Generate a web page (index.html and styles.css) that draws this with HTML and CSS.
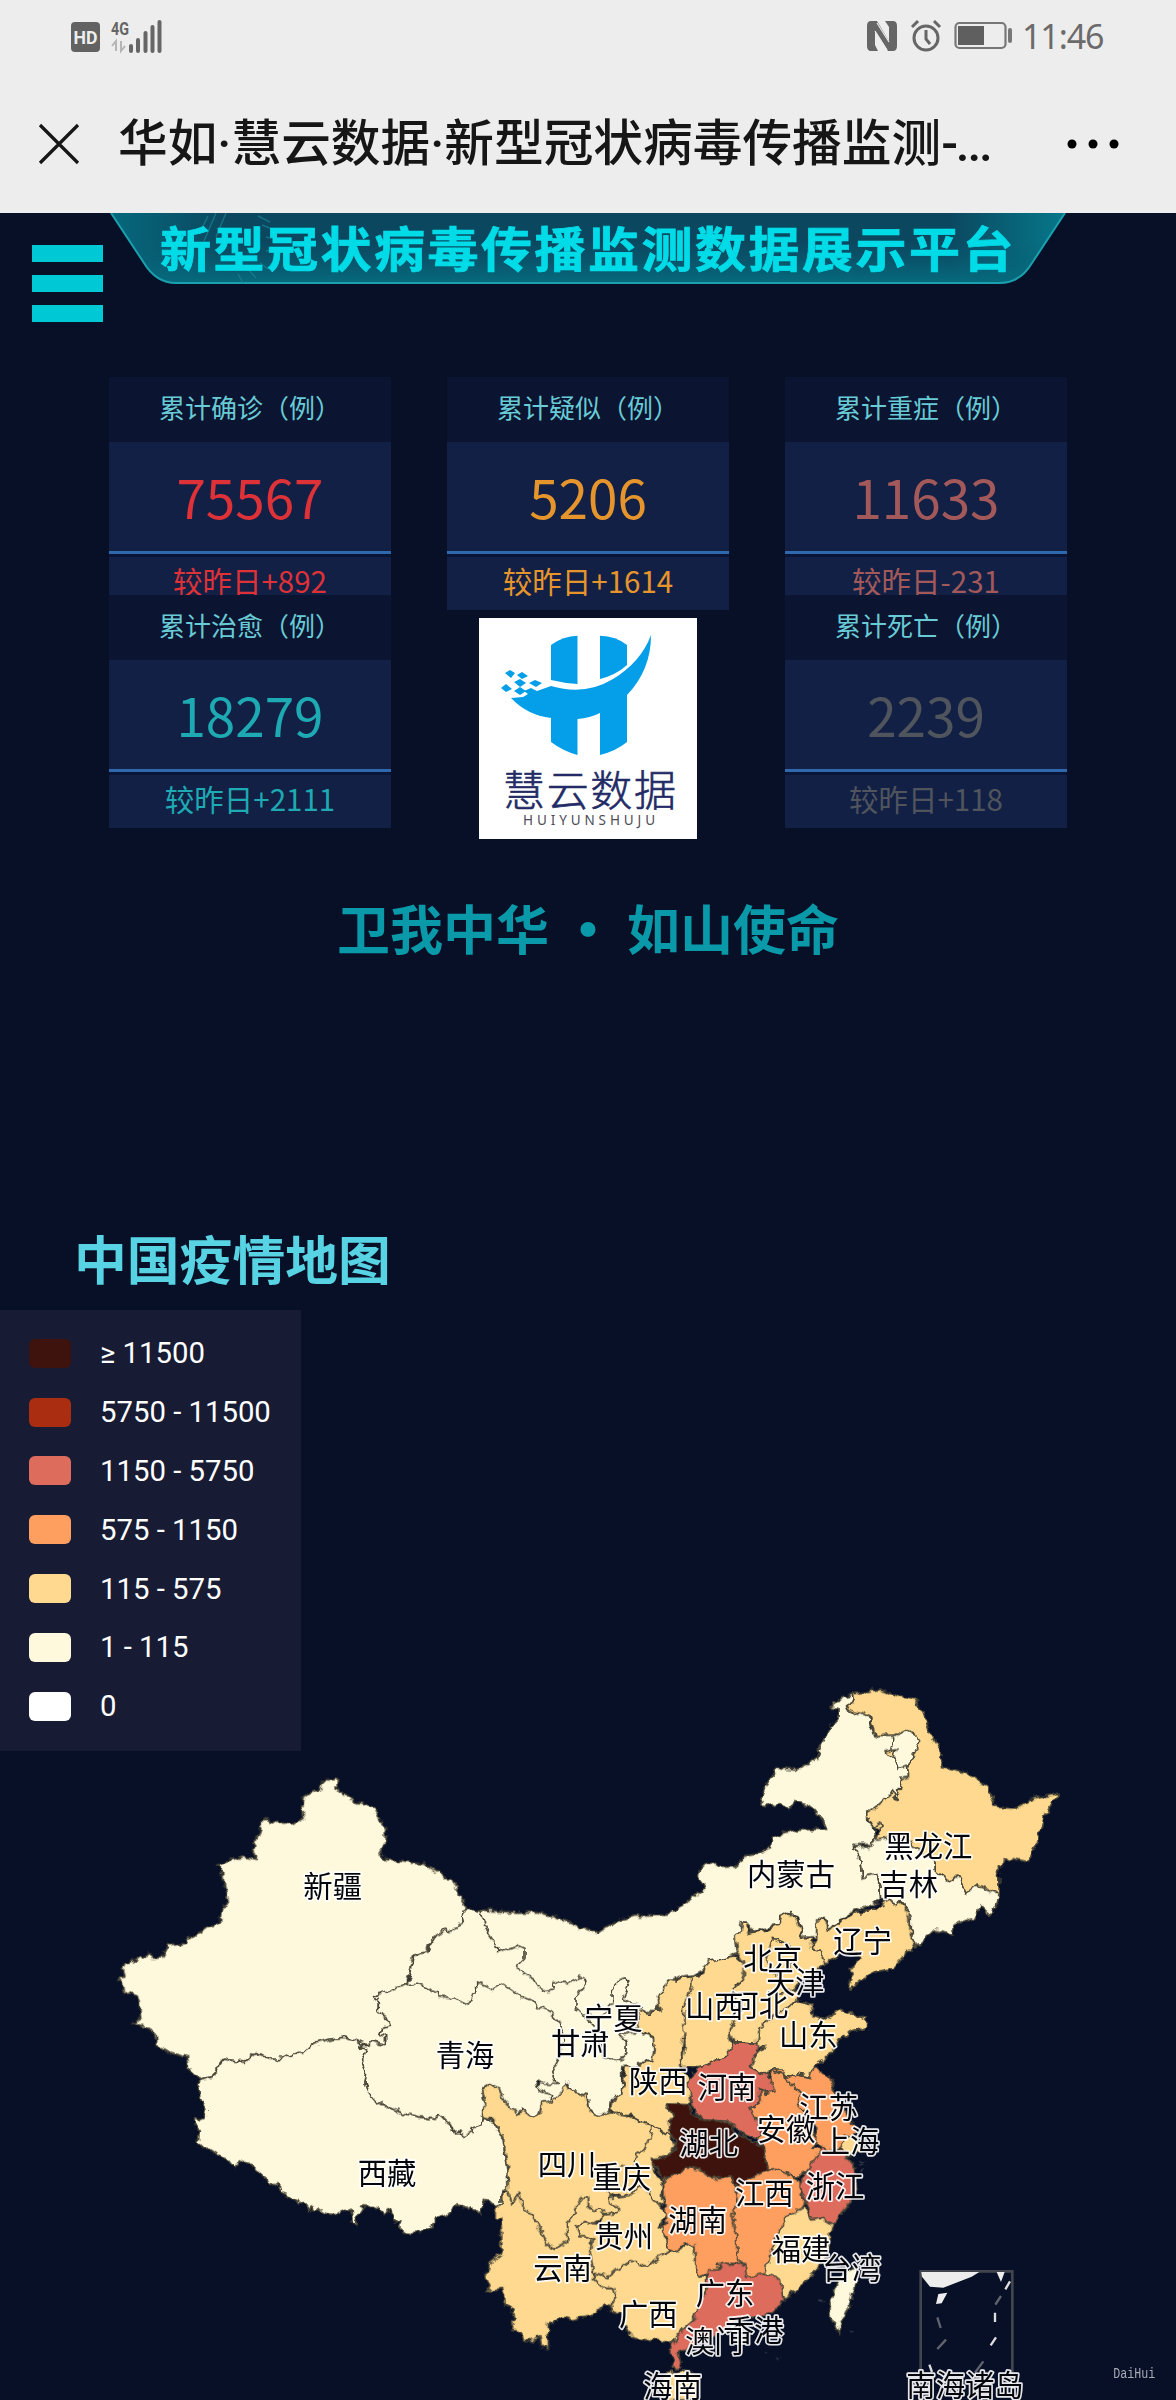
FILE: index.html
```html
<!DOCTYPE html>
<html lang="zh-CN">
<head>
<meta charset="utf-8">
<title>华如·慧云数据·新型冠状病毒传播监测</title>
<link rel="stylesheet" href="styles.css">
</head>
<body>
<header class="top">
  <div class="status">
    <svg class="status-left" viewBox="0 0 100 36" width="100" height="36">
      <rect x="1" y="4" width="29" height="30" rx="4" fill="#626262"/>
      <text x="15.500" y="25.500" class="hd" textLength="24" lengthAdjust="spacingAndGlyphs">HD</text>
      <text x="41" y="16.500" class="g4" textLength="18" lengthAdjust="spacingAndGlyphs">4G</text>
      <path d="M46 33V23l-4 5M51 23v10l4-5" fill="none" stroke="#b5b5b5" stroke-width="2"/>
      <path d="M61 29v5M68 23v11M75.500 16v18M82.500 10v24M89.500 5v29" stroke="#666" stroke-width="4" stroke-linecap="round" transform="translate(0 -1)"/>
    </svg>
    <div class="status-right">
      <svg viewBox="0 0 32 34" width="32" height="34">
        <path d="M5 2h6l12 20V8l-4-6h8q4 0 4 5v20q0 5-4 5h-5L9 12v14l3 6H5q-4 0-4-5V7q0-5 4-5z" fill="#666"/>
        <path d="M11 4l12 19M9 12l12 19" stroke="#ededed" stroke-width="1.200"/>
      </svg>
      <svg viewBox="0 0 32 34" width="32" height="34" fill="none" stroke="#666" stroke-width="3">
        <circle cx="16" cy="19" r="12"/><path d="M16 11v9l4 5M2 8l6-6M30 8l-6-6"/>
      </svg>
      <svg viewBox="0 0 60 30" width="60" height="30">
        <rect x="1.500" y="2" width="50" height="25" rx="4" fill="none" stroke="#777" stroke-width="2.200"/>
        <rect x="4" y="5" width="26" height="19" fill="#5f5f5f"/><rect x="54" y="7" width="4" height="15" rx="2" fill="#777"/>
      </svg>
      <span class="time">11:46</span>
    </div>
  </div>
  <div class="nav">
    <svg viewBox="0 0 42 42" width="42" height="42"><path d="M2 2L40 40M40 2L2 40" stroke="#161616" stroke-width="3.200"/></svg>
    <h1>华如·慧云数据·新型冠状病毒传播监测<span>-...</span></h1>
    <svg viewBox="0 0 54 12" width="54" height="12"><circle cx="6" cy="6" r="4.500"/><circle cx="27" cy="6" r="4.500"/><circle cx="48" cy="6" r="4.500"/></svg>
  </div>
</header>

<div class="hero">
  <div class="menu"><i></i><i></i><i></i></div>
  <div class="banner">
    <svg viewBox="0 0 956 72" width="956" height="72">
      <defs>
        <linearGradient id="bannerFill" x1="0" x2="1" y1="0" y2="0"><stop offset="0" stop-color="#06687c"/><stop offset=".12" stop-color="#0b4860"/><stop offset=".88" stop-color="#0b4860"/><stop offset="1" stop-color="#06788a"/></linearGradient>
        <linearGradient id="bannerGlow" x1="0" x2="0" y1="0" y2="1"><stop offset=".4" stop-color="#075e74" stop-opacity="0"/><stop offset="1" stop-color="#066b7e"/></linearGradient>
      </defs>
      <path d="M1 0L34 50Q46 70 66 70H890Q910 70 922 50L955 0Z" fill="url(#bannerFill)"/>
      <path d="M1 0L34 50Q46 70 66 70H890Q910 70 922 50L955 0" fill="url(#bannerGlow)" stroke="#1ba0ae" stroke-width="2"/>
      <path d="M148 3l12 6M152 12l10 4M156 24l10 2M156 38l10-2M150 50l8 6M138 56l8 9M128 61l5 9M98 3l-9 18M106 0l-12 28M116 0l-10 24" stroke="#1a8290" stroke-opacity=".7" stroke-width="1.500"/>
    </svg>
    <h2>新型冠状病毒传播监测数据展示平台</h2>
  </div>
</div>

<main>
  <section class="stats">
    <div class="col">
      <article class="card red"><h3>累计确诊（例）</h3><strong>75567</strong><p>较昨日+892</p></article>
      <article class="card teal"><h3>累计治愈（例）</h3><strong>18279</strong><p>较昨日+2111</p></article>
    </div>
    <div class="col">
      <article class="card orange"><h3>累计疑似（例）</h3><strong>5206</strong><p>较昨日+1614</p></article>
      <svg class="logo" viewBox="0 0 218 221" width="218" height="221">
        <rect width="218" height="221" fill="#fff"/>
        <g fill="#049fe8">
          <path d="M72 27Q84 18 98.500 17.700V66Q84 65 72 62Z"/>
          <path d="M121 17.700Q137 18 148 27V47Q137 57 121 61Z"/>
          <path d="M32 80L44 79 49 76 45 73 52 70 58 73 72 68Q106 78 134 61 162 44 172 17 172 52 148 77V124Q137 133 121 137V95Q111 100 98.500 101V137Q84 133 72 124V100Q48 97 32 80Z"/>
          <path d="M26 55l5-3 5 3-4 5zM38 57l5-3 6 4-6 3zM35 64l6-3 6 4-6 4zM50 65l6-3 7 3-6 4zM22 70l5-4 6 5-6 3zM35 73l6-4 6 4-6 4z"/>
        </g>
        <text x="24" y="188" class="logo-cn" textLength="173">慧云数据</text>
        <text x="44" y="207" class="logo-en" textLength="132">HUIYUNSHUJU</text>
      </svg>
    </div>
    <div class="col">
      <article class="card rust"><h3>累计重症（例）</h3><strong>11633</strong><p>较昨日-231</p></article>
      <article class="card gray"><h3>累计死亡（例）</h3><strong>2239</strong><p>较昨日+118</p></article>
    </div>
  </section>

  <div class="slogan">卫我中华<b>•</b>如山使命</div>
  <h2 class="map-title">中国疫情地图</h2>

  <section class="map">
    <svg class="china" viewBox="0 3930 3528 3270" width="1176" height="1090">
      <defs>
        <filter id="coast" filterUnits="userSpaceOnUse" x="200" y="4900" width="3000" height="2300" color-interpolation-filters="sRGB">
          <feTurbulence type="fractalNoise" baseFrequency=".045" numOctaves="2" seed="4"/>
          <feDisplacementMap in="SourceGraphic" scale="24" xChannelSelector="R" yChannelSelector="G"/>
        </filter>
      </defs>
      <g class="land" filter="url(#coast)">
        <g class="l1">
          <path transform="translate(300 5280)" d="M1100 445L1085 420 1075 395 1062 370 1055 355 1035 352 1010 335 970 312 910 306 850 298 838 282 855 250 857 205 835 175 820 140 785 128 765 128 740 105 725 100 708 80 710 58 695 62 665 62 657 90 630 98 610 110 605 135 612 175 595 185 578 195 560 188 530 190 510 183 490 175 485 195 475 225 462 250 458 272 470 298 430 290 400 300 370 305 350 315 366 330 372 370 380 400 385 425 370 435 378 440 362 460 362 485 350 493 325 500 300 517 270 535 255 550 205 557 195 580 180 597 152 597 150 580 135 590 115 592 100 605 78 612 70 630 75 650 55 655 68 670 70 700 90 697 112 705 118 730 122 775 100 790 140 800 150 812 165 825 170 860 195 868 220 882 262 892 268 930 285 945 300 960 340 953 350 925 370 898 400 902 430 907 465 878 490 885 510 898 540 898 560 888 600 878 612 880 640 850 690 838 735 832 765 840 790 852 808 855 810 845 835 852 857 857 857 828 842 822 848 805 868 797 858 770 835 755 835 715 820 718 815 708 850 698 915 678 917 660 930 640 942 582 980 575 985 560 1010 530 1045 510 1050 518 1085 500 1090 485 1085 462Z"/>
          <path transform="translate(570 6300)" d="M30 -60L22 -35 30 -10 48 30 45 55 30 62 15 48 12 75 28 90 25 125 38 145 60 145 80 158 85 168 115 182 135 207 148 180 175 188 200 212 235 240 245 258 260 248 273 262 275 282 300 290 318 300 325 312 343 308 360 330 364 315 370 330 385 325 405 338 440 342 460 335 483 325 487 365 495 378 500 350 520 318 545 320 570 325 580 345 600 328 612 345 612 365 632 362 633 395 665 398 700 395 718 385 735 358 770 345 800 315 825 320 850 332 873 342 880 305 893 298 908 312 918 320 935 322 932 290 940 270 955 268 953 230 945 170 940 120 935 105 910 65 880 50 875 72 850 85 848 98 835 92 822 108 812 96 790 98 780 70 750 45 730 57 690 50 640 40 590 18 560 10 530 -30 525 -50 530 -85 515 -115 530 -150 510 -162 520 -168 495 -180 465 -188 420 -182 370 -170 342 -140 330 -142 290 -132 270 -122 240 -122 220 -135 195 -142 160 -113 130 -118 100 -122 80 -95 70 -67Z"/>
          <g transform="translate(1050 5640)">
            <path d="M350 88L335 95 340 130 300 155 290 148 260 165 232 212 195 222 180 290 165 315 300 400 640 500 560 620 570 720 640 640 655 605 665 635 710 645 715 685 745 708 780 695 785 655 815 645 815 560 870 560 870 545 912 545 912 475 870 455 920 440 930 340 880 240 700 200 390 90Z"/>
            <path d="M165 315L205 310 235 325 240 330 265 335 267 350 320 358 345 370 362 362 368 345 380 338 380 305 430 327 460 310 480 325 510 348 545 360 560 378 600 395 632 430 640 480 625 540 605 575 620 610 590 610 560 600 555 612 568 630 605 645 598 668 575 672 570 700 548 710 515 685 508 700 475 685 445 640 425 612 400 625 400 650 410 665 398 690 400 710 395 732 370 745 368 758 342 768 332 756 310 758 300 730 270 705 250 717 210 710 160 700 110 678 80 670 50 630 45 610 50 575 35 545 50 510 30 498 58 495 60 485 85 492 107 497 107 468 92 462 98 445 118 437 108 410 85 395 85 355 70 358 65 348 100 338Z"/>
            <path fill="none" d="M700 405L740 450 760 530 810 545 830 520 832 490 810 465 840 455 870 455"/>
          </g>
          <path transform="translate(1920 5010)" d="M-480 720L-370 727 -310 725 -270 737 -230 752 -190 768 -150 780 -125 788 -100 770 -70 755 -20 738 40 737 85 735 130 705 195 655 175 625 178 600 200 578 225 580 240 592 280 590 320 558 350 552 390 535 400 505 430 488 480 480 530 478 560 478 550 455 520 420 500 405 465 395 445 415 420 400 375 410 362 390 378 350 413 288 440 298 465 300 500 285 530 265 545 220 570 170 597 150 597 115 570 110 600 85 640 72 643 90 620 115 650 135 665 125 690 135 690 160 705 197 740 192 765 195 805 175 842 212 825 250 800 290 803 322 785 325 770 390 760 365 715 405 680 430 680 450 700 470 705 508 690 535 675 520 640 522 645 545 658 555 665 620 710 612 720 650 722 690 700 702 640 725 600 750 567 778 555 745 535 742 530 800 490 802 475 740 445 728 420 740 418 765 370 775 335 785 325 760 305 762 300 790 285 800 290 850 240 872 212 872 200 895 160 915 120 920 90 930 65 980 50 1025 15 1025 0 1010 -35 995 -52 985 -35 945 -42 923 -65 930 -83 955 -85 1000 -120 1040 -170 1035 -195 1010 -195 980 -162 940 -170 920 -210 938 -260 935 -265 960 -280 965 -310 945 -325 920 -370 892 -345 865 -345 835 -360 828 -420 845 -430 848 -430 830 -458 790 -455 780Z"/>
        </g>
        <g class="l2" transform="translate(1320 6210)">
          <path d="M128 140L130 110 140 98 130 75 128 60 150 40 175 52 190 90 215 115 240 130 248 118 278 140 300 130 305 100 330 95 355 82 380 35 395 65 440 75 445 118 470 136 510 125 560 135 600 155 635 165 690 195 700 220 710 215 690 255 638 265 640 300 665 335 670 400 655 408 635 385 625 360 600 350 570 380 545 380 525 375 508 385 515 405 535 415 535 430 490 435 485 425 445 415 445 380 425 382 420 400 405 415 405 435 380 462 380 515 345 535 325 528 290 455 275 430 250 420 235 370 217 405 205 365 203 300 195 240 190 205 160 150Z"/>
          <path fill="none" d="M635 165L635 190 615 235 590 250 580 290 540 290 500 330 510 380"/>
          <path d="M205 365L217 405 235 370 250 420 275 430 290 455 325 528 345 535 380 515 380 462 405 435 405 415 425 382 445 380 445 415 490 420 490 440 460 460 435 455 415 470 420 500 440 500 458 510 450 540 460 580 458 625 480 640 490 655 520 655 530 680 510 710 490 705 460 735 425 740 400 750 360 740 350 755 325 762 325 835 305 830 300 800 280 815 250 810 245 785 213 780 222 750 218 722 195 705 192 658 140 665 150 650 137 620 150 580 185 550 185 490 182 450 165 440 168 410 185 400 185 370Z"/>
          <path d="M485 455L490 435 535 430 535 415 515 405 508 385 545 382 570 380 600 350 625 360 635 385 655 408 665 408 680 435 655 470 680 480 675 510 690 545 660 560 620 590 575 572 530 600 500 620 470 610 465 625 458 590 450 540 458 510 440 500 420 500 415 470 435 455 470 462Z"/>
          <path d="M458 625L470 610 500 620 530 600 575 572 620 590 660 560 690 545 705 545 740 525 765 525 765 580 780 620 800 620 800 660 780 700 770 740 740 770 720 795 690 820 655 808 620 810 580 800 560 780 545 735 505 720 530 680 520 655 490 655Z"/>
        </g>
        <g transform="translate(1920 5010)">
          <path class="l2" d="M640 72L720 58 780 80 825 90 850 130 870 190 895 235 910 290 960 302 1000 320 1045 350 1065 412 1130 415 1180 385 1255 370 1235 400 1210 440 1195 510 1165 575 1110 565 1075 590 1078 675 1045 660 1010 645 980 670 950 615 930 638 885 600 885 575 760 500 705 508 720 480 700 470 680 440 680 430 715 405 760 365 770 390 785 325 803 322 800 290 825 250 842 212 805 175 765 195 705 197 690 135 665 125 650 135 620 115 643 90Z"/>
          <path class="l1" d="M705 508L760 500 800 510 885 575 885 600 930 638 950 615 980 670 1010 645 1045 660 1078 675 1070 700 1050 735 1020 705 1000 745 935 765 940 795 880 780 830 830 810 780 810 745 785 690 770 715 745 690 722 690 720 650 710 612 665 620 658 555 640 535 645 520 690 535Z"/>
          <path fill="none" d="M762 195L755 240 765 265 775 295 800 285M702 470L722 458 730 468 712 478"/>
          <path class="l2" d="M738 245L768 240 762 262 745 260Z"/>
        </g>
        <g class="l2" transform="translate(1800 5640)">
          <path d="M280 288L262 293 245 290 225 300 208 297 175 360 180 395 140 400 118 390 110 450 160 470 162 510 155 545 120 545 120 560 75 560 65 640 40 655 35 690 50 705 85 700 120 725 155 735 210 765 225 730 220 710 200 675 265 675 275 640 262 590 240 560 255 440 250 380 275 320Z"/>
          <path d="M275 290L310 280 330 240 405 228 430 250 430 300 400 330 410 380 400 430 388 455 395 500 385 520 345 545 300 560 240 560 255 500 250 380 275 320Z"/>
          <path d="M440 130L425 128 418 160 405 170 410 215 430 250 430 300 400 330 410 380 400 430 388 455 400 485 470 490 475 455 500 420 540 395 590 365 600 350 580 330 600 300 640 290 675 250 660 215 632 205 640 175 605 172 598 130 575 98 545 105 540 130 500 150 470 155 445 160Z"/>
          <path fill="none" d="M520 175L500 240 520 285 570 270 590 215 550 185ZM580 330L520 340 540 290"/>
          <path d="M632 205L650 180 650 120 665 112 690 148 720 125 770 98 830 85 865 60 890 75 905 65 930 110 930 150 948 205 930 210 880 265 830 275 800 290 745 328 755 295 750 270 780 230 760 215 720 225 675 250 660 215Z"/>
          <path d="M470 490L475 455 500 420 540 395 590 365 635 375 640 410 670 420 720 390 750 400 800 415 800 440 750 455 720 480 700 510 670 540 640 560 630 590 590 582 560 592 520 570 500 585 450 560 465 530 500 495 470 510Z"/>
        </g>
        <g transform="translate(1800 5640)">
          <path class="l4" d="M400 485L470 490 475 510 465 530 450 560 500 585 525 600 525 635 500 640 480 625 480 670 450 685 470 720 485 760 470 770 440 765 400 740 395 725 310 720 275 680 265 600 300 560 345 545 385 520Z"/>
          <path class="l3" d="M520 570L545 570 560 600 600 640 590 670 620 700 650 780 640 800 665 810 650 850 600 890 570 885 540 870 510 870 495 835 500 810 470 770 485 760 470 720 450 685 480 670 480 625 500 640 525 635 510 590Z"/>
          <path class="l3" d="M520 570L560 592 590 582 630 590 640 560 690 595 710 650 740 700 770 755 730 805 690 815 650 790 650 740 620 700 590 670 600 640 560 600 545 585Z"/>
        </g>
        <g transform="translate(1800 6270)">
          <path class="l2" d="M735 135L762 145 785 180 750 195 720 185Z"/>
          <path class="l4" d="M665 170L690 180 730 185 760 225 770 260 755 330 720 380 700 405 665 385 635 390 625 350 600 290 610 260 635 225 650 195Z"/>
          <path class="l3" d="M505 240L530 235 560 250 600 270 600 295 615 335 605 360 560 380 535 430 510 500 500 540 490 560 440 565 430 540 410 510 410 440 395 380 410 340 405 290 450 265Z"/>
          <path class="l3" d="M205 258L240 250 260 232 300 240 340 265 395 258 405 290 410 340 395 380 410 440 410 510 435 520 360 520 355 540 330 550 300 560 285 520 285 465 250 465 225 485 205 480 200 440 180 410 200 395 195 350 190 275Z"/>
          <path class="l5" d="M200 40L265 45 275 70 310 90 395 95 400 130 430 135 450 150 500 175 495 205 505 240 450 265 405 290 395 258 340 265 300 240 260 232 240 250 205 258 190 275 180 245 158 225 160 205 205 198 225 180 230 150 208 130 205 95 220 78Z"/>
          <path class="l2" d="M615 350L635 390 665 385 700 405 690 450 680 500 640 550 610 580 555 630 545 600 540 570 495 550 510 500 535 430 560 380Z"/>
          <path class="l4" d="M370 515L400 525 435 520 440 565 495 550 540 570 550 630 520 670 450 680 390 700 340 740 290 760 250 780 235 790 245 830 225 835 210 790 215 760 250 715 285 685 300 640 320 600 325 540 355 540Z"/>
          <path class="l1" d="M770 530L770 570 745 655 720 700 718 732 690 680 690 640 705 590 740 540Z"/>
          <path class="l2" d="M200 850L260 840 300 860 290 930 200 930 170 890Z"/>
          <path class="isle" d="M780 210l12 6M778 228l14-4M785 240l6 5M660 630l10 4M752 720l8 8M495 785l8 3M532 803l8 6"/>
        </g>
      </g>
      <g class="sea" transform="translate(2580 6720)">
        <path class="frame" d="M182 480V94H457V480"/>
        <path fill="#ededed" d="M184 96H358L335 110 250 143 210 140 186 110ZM410 96H434L423 126ZM235 162L262 158 245 190 228 192Z"/>
        <path class="dash dim" d="M232 232L242 264M258 299L232 327M423 168L406 194M370 364L345 398"/>
        <path class="dash" d="M450 124L436 148M405 218V246M408 292L392 316M208 374L216 396"/>
      </g>
      <g class="names" transform="translate(-2 -2)">
        <text x="1000" y="5693">新疆</text><text x="1397" y="6201">青海</text><text x="1743" y="6165">甘肃</text><text x="1842" y="6090">宁夏</text>
        <text x="1163" y="6555">西藏</text><text x="1977" y="6278">陕西</text><text x="1703" y="6526">四川</text><text x="1867" y="6566">重庆</text>
        <text x="1873" y="6743">贵州</text><text x="1690" y="6840">云南</text><text x="1947" y="6976">广西</text><text x="2375" y="5656">内蒙古</text>
        <text x="2787" y="5573">黑龙江</text><text x="2728" y="5688">吉林</text><text x="2590" y="5858">辽宁</text><text x="2320" y="5908">北京</text>
        <text x="2278" y="6050">河北</text><text x="2388" y="5981">天津</text><text x="2145" y="6053">山西</text><text x="2427" y="6140">山东</text>
        <text x="2183" y="6295">河南</text><text x="2128" y="6465">湖北</text><text x="2488" y="6355">江苏</text><text x="2360" y="6423">安徽</text>
        <text x="2552" y="6458">上海</text><text x="2095" y="6696">湖南</text><text x="2295" y="6615">江西</text><text x="2507" y="6593">浙江</text>
        <text x="2405" y="6783">福建</text><text x="2557" y="6838">台湾</text><text x="2177" y="6913">广东</text><text x="2265" y="7025">香港</text>
        <text x="2145" y="7058">澳门</text><text x="2020" y="7193">海南</text><text x="2897" y="7190">南海诸岛</text>
      </g>
      <text class="sign" x="3340" y="7134" textLength="126" lengthAdjust="spacingAndGlyphs">DaiHui</text>
    </svg>
    <ul class="legend">
      <li><i class="k6"></i>≥ 11500</li>
      <li><i class="k5"></i>5750 - 11500</li>
      <li><i class="k4"></i>1150 - 5750</li>
      <li><i class="k3"></i>575 - 1150</li>
      <li><i class="k2"></i>115 - 575</li>
      <li><i class="k1"></i>1 - 115</li>
      <li><i class="k0"></i>0</li>
    </ul>
  </section>
</main>
</body>
</html>
```
FILE: styles.css
```css
* { box-sizing: border-box; margin: 0; padding: 0; }
body {
  width: 1176px;
  height: 2400px;
  overflow: hidden;
  background: #081028;
  font-family: "Noto Sans CJK SC", "Noto Sans", sans-serif;
}
svg { display: block; flex: none; }

/* phone chrome */
.top { height: 213px; background: #ededed; }
.status {
  height: 72px;
  padding: 0 70px;
  display: flex;
  align-items: center;
  justify-content: space-between;
}
.hd { font: 700 19px Roboto, sans-serif; fill: #eee; text-anchor: middle; }
.g4 { font: 700 19px Roboto, sans-serif; fill: #666; }
.status-right { display: flex; align-items: center; gap: 12px; }
.time { font: 400 34px/40px "Noto Sans", sans-serif; color: #6b6b6b; margin-left: -4px; width: 84px; letter-spacing: -1.1px; }
.nav { height: 141px; display: flex; align-items: center; padding: 3px 56px 0 38px; }
.nav h1 {
  flex: 1;
  margin-left: 38px;
  padding-bottom: 1px;
  font: 500 49.700px/72px Roboto, "Noto Sans CJK SC", sans-serif;
  color: #161616;
  white-space: nowrap;
}
.nav h1 span { letter-spacing: -2.200px; }

/* banner */
.hero { height: 164px; display: flex; align-items: flex-start; }
.menu { width: 110px; padding: 32px 0 0 32px; display: grid; gap: 13px; }
.menu i { width: 71px; height: 17px; background: #00c9d6; }
.banner { width: 956px; display: grid; justify-items: center; }
.banner > * { grid-area: 1 / 1; }
.banner h2 {
  font-size: 51px;
  line-height: 66px;
  font-weight: 700;
  letter-spacing: 2.500px;
  color: #00dbe8;
  white-space: nowrap;
  transform: scaleY(.93);
  -webkit-text-stroke: .8px #00dbe8;
}

/* statistics */
.stats { height: 463px; padding: 0 109px; display: flex; justify-content: space-between; align-items: flex-start; }
.col { width: 282px; display: flex; flex-direction: column; align-items: center; }
.card { width: 282px; height: 233px; text-align: center; background: #122045; }
.card + .card { margin-top: -15.500px; }
.card h3 { height: 65px; font-weight: 400; font-size: 26px; line-height: 60px; color: #68cbd5; background: #0b1430; }
.card strong {
  display: block;
  height: 112px;
  font-size: 53px;
  line-height: 108px;
  font-weight: 400;
  border-bottom: 3px solid #3068ad;
}
.card p { height: 56px; font-size: 29.500px; line-height: 46px; border-top: 3px solid #081536; white-space: nowrap; }
.red { color: #de3238; }
.teal { color: #1eaab2; }
.orange { color: #e6952c; }
.rust { color: #a3595a; }
.gray { color: #50545d; }
.logo { margin-top: 8px; }
.logo-cn { font: 300 42px "Noto Sans CJK SC", sans-serif; fill: #222b66; stroke: #222b66; stroke-width: .6; }
.logo-en { font: 400 13.500px "Noto Sans", sans-serif; fill: #4c4c55; }

.slogan {
  height: 170px;
  padding-top: 47px;
  font-size: 53px;
  line-height: 80px;
  font-weight: 700;
  text-align: center;
  color: #0a99a8;
}
.slogan b { display: inline-block; width: 78px; text-align: center; }
.map-title { height: 300px; padding: 207px 0 0 74px; font-size: 52.800px; line-height: 80px; font-weight: 700; color: #57d3e4; }

/* map */
.map { position: relative; height: 1090px; }
.legend {
  position: absolute;
  left: 0;
  top: 0;
  width: 301px;
  height: 441px;
  padding: 14px 0 0 29px;
  list-style: none;
  background: #171c34;
  color: #fff;
  font: 400 29.300px Roboto, sans-serif;
}
.legend li { height: 58.800px; display: flex; align-items: center; gap: 29px; }
.legend i { width: 42px; height: 29px; border-radius: 6px; }
.k6 { background: #3e130d; }
.k5 { background: #aa2d12; }
.k4 { background: #de6c5d; }
.k3 { background: #fe9f60; }
.k2 { background: #fed98f; }
.k1 { background: #fef8dc; }
.k0 { background: #fff; }

.land { stroke: #4a4738; stroke-width: 5; stroke-linejoin: round; }
.l1 { fill: #fef8dc; }
.l2 { fill: #fed98f; }
.l3 { fill: #fe9f60; }
.l4 { fill: #de6c5d; }
.l5 { fill: #3e130d; }
.isle { stroke: #3f4350; }
.frame { fill: none; stroke: #42454d; stroke-width: 8; }
.dash { stroke: #ddd; stroke-width: 7; }
.dim { stroke: #62656e; }
.names {
  font-size: 88px;
  text-anchor: middle;
  fill: #05060c;
}
.names text { stroke: #fff; stroke-width: 10; stroke-linejoin: round; paint-order: stroke; stroke-opacity: .9; }
.sign { font: 400 42px "Liberation Mono", monospace; fill: #a8abb3; }
```
